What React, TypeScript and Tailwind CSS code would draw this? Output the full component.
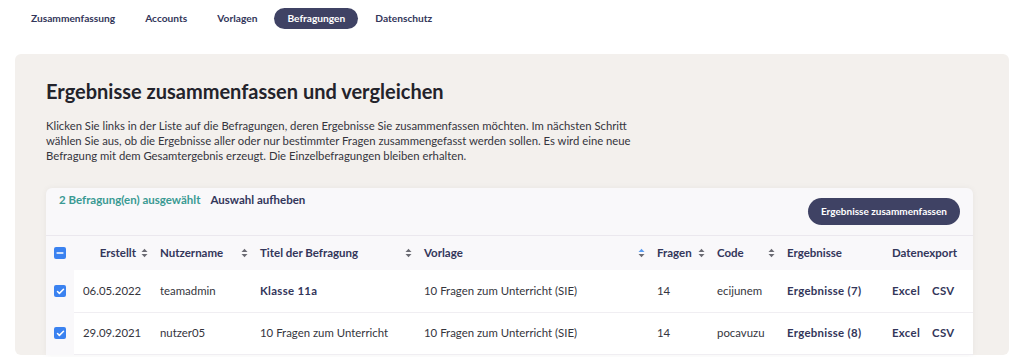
import { Check, Minus } from "lucide-react";

const navItems = [
  "Zusammenfassung",
  "Accounts",
  "Vorlagen",
  "Befragungen",
  "Datenschutz",
];

const columns = [
  { label: "Erstellt", width: "w-[77px]", sort: true, end: true },
  { label: "Nutzername", width: "w-[100px]", sort: true },
  { label: "Titel der Befragung", width: "w-[164px]", sort: true },
  { label: "Vorlage", width: "w-[233px]", sort: true, active: true },
  { label: "Fragen", width: "w-[60px]", sort: true },
  { label: "Code", width: "w-[70px]", sort: true },
  { label: "Ergebnisse", width: "w-[105px]" },
  { label: "Datenexport", width: "" },
];

const rows = [
  {
    created: "06.05.2022",
    user: "teamadmin",
    title: "Klasse 11a",
    titleBold: true,
    template: "10 Fragen zum Unterricht (SIE)",
    questions: "14",
    code: "ecijunem",
    results: "Ergebnisse (7)",
  },
  {
    created: "29.09.2021",
    user: "nutzer05",
    title: "10 Fragen zum Unterricht",
    titleBold: false,
    template: "10 Fragen zum Unterricht (SIE)",
    questions: "14",
    code: "pocavuzu",
    results: "Ergebnisse (8)",
  },
];

function SortIcon({ active }: { active?: boolean }) {
  return (
    <svg width="7" height="10" viewBox="0 0 7 10" className="shrink-0">
      <path d="M0.5 4 L3.5 0.8 L6.5 4 Z" fill={active ? "#5b9cf0" : "#6b6b73"} />
      <path d="M0.5 6 L3.5 9.2 L6.5 6 Z" fill="#6b6b73" />
    </svg>
  );
}

function Checkbox({ indeterminate }: { indeterminate?: boolean }) {
  return (
    <span className="flex h-[12px] w-[12px] items-center justify-center rounded-[2px] bg-[#3b82f0] text-white">
      {indeterminate ? (
        <Minus size={10} strokeWidth={3.5} />
      ) : (
        <Check size={9} strokeWidth={4} />
      )}
    </span>
  );
}

const cell = "border-b border-[#f0eef2] bg-white pl-[9px]";
const strong = "font-bold tracking-[0.3px] text-[#33365a]";

export default function App() {
  return (
    <div className="min-h-[357px] bg-white font-['Lato',sans-serif] text-[#2a2a33]">
      <nav className="flex items-center gap-[4px] px-[18px] pt-[8px]">
        {navItems.map((item) => (
          <span
            key={item}
            className={`rounded-full px-[13px] py-[3px] text-[10.2px] font-bold leading-[15px] ${
              item === "Befragungen"
                ? "bg-[#3f4264] text-white"
                : "text-[#33365a]"
            }`}
          >
            {item}
          </span>
        ))}
      </nav>

      <section className="mx-[15px] mt-[25px] rounded-[6px] bg-[#f3f0ed] px-[31px] pt-[24px]">
        <h1 className="text-[20px] font-bold leading-[26px] text-[#23232b]">
          Ergebnisse zusammenfassen und vergleichen
        </h1>
        <p className="mt-[14px] w-[600px] text-[11.3px] leading-[15px] text-[#35353d]">
          Klicken Sie links in der Liste auf die Befragungen, deren Ergebnisse
          Sie zusammenfassen möchten. Im nächsten Schritt wählen Sie aus, ob die
          Ergebnisse aller oder nur bestimmter Fragen zusammengefasst werden
          sollen. Es wird eine neue Befragung mit dem Gesamtergebnis erzeugt. Die
          Einzelbefragungen bleiben erhalten.
        </p>

        <div className="mt-[25px] w-[927px] overflow-hidden rounded-t-[6px] bg-[#f9f8fa] shadow-[0_0_6px_rgba(0,0,0,0.05)]">
          <div className="flex items-start justify-between border-b border-[#ebe8ee] pl-[13px] pr-[13px] pt-[4px] pb-[10px]">
            <div className="flex gap-[10px] text-[11.5px] font-bold leading-[16px]">
              <span className="text-[#3a9a93]">2 Befragung(en) ausgewählt</span>
              <span className="text-[#33365a]">Auswahl aufheben</span>
            </div>
            <button className="mt-[6px] h-[27px] rounded-full bg-[#3f4264] px-[13px] text-[10px] font-bold text-white">
              Ergebnisse zusammenfassen
            </button>
          </div>

          <table className="w-full table-fixed border-collapse text-[11.4px]">
            <thead>
              <tr className="h-[34px] text-[11.5px] font-bold text-[#33365a]">
                <th className="w-[28px] pl-[8px] text-left">
                  <Checkbox indeterminate />
                </th>
                {columns.map((col) => (
                  <th
                    key={col.label}
                    className={`${col.width} pl-[9px] pr-[3px] text-left font-bold`}
                  >
                    <div
                      className={`flex items-center gap-[5px] ${
                        col.end ? "justify-end" : "justify-between"
                      }`}
                    >
                      <span className="whitespace-nowrap">{col.label}</span>
                      {col.sort && <SortIcon active={col.active} />}
                    </div>
                  </th>
                ))}
              </tr>
            </thead>
            <tbody>
              {rows.map((row) => (
                <tr key={row.code} className="h-[42px]">
                  <td className="pl-[8px]">
                    <Checkbox />
                  </td>
                  <td className={`${cell} text-[#35353d]`}>{row.created}</td>
                  <td className={`${cell} text-[#35353d]`}>{row.user}</td>
                  <td
                    className={`${cell} ${
                      row.titleBold ? strong : "text-[#35353d]"
                    }`}
                  >
                    {row.title}
                  </td>
                  <td className={`${cell} text-[#35353d]`}>{row.template}</td>
                  <td className={`${cell} text-[#35353d]`}>{row.questions}</td>
                  <td className={`${cell} text-[#35353d]`}>{row.code}</td>
                  <td className={`${cell} ${strong}`}>{row.results}</td>
                  <td className={`${cell} ${strong}`}>
                    <span className="mr-[12px]">Excel</span>
                    <span>CSV</span>
                  </td>
                </tr>
              ))}
            </tbody>
          </table>
        </div>
      </section>
    </div>
  );
}
